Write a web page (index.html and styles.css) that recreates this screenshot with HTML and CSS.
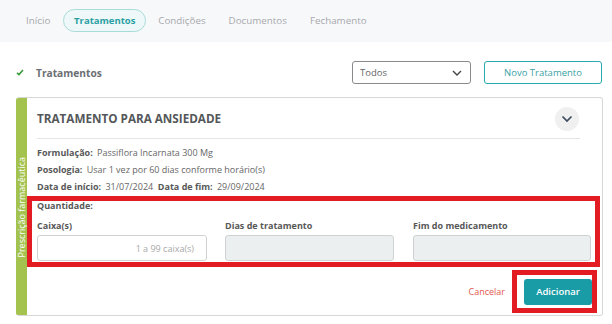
FILE: index.html
```html
<!DOCTYPE html>
<html lang="pt">
<head>
<meta charset="utf-8">
<link rel="stylesheet" href="styles.css">
</head>
<body>
<nav class="tabs">
  <span class="tab">Início</span>
  <span class="tab active">Tratamentos</span>
  <span class="tab">Condições</span>
  <span class="tab">Documentos</span>
  <span class="tab">Fechamento</span>
</nav>
<div class="section-head">
  <div class="section-title">
    <svg class="check" width="8" height="7" viewBox="0 0 8 7"><path d="M1 3.8 L3 5.6 L7 1" fill="none" stroke="#3a9a3a" stroke-width="1.6"/></svg>
    <span>Tratamentos</span>
  </div>
  <div class="section-actions">
    <div class="select"><span>Todos</span>
      <svg width="10" height="6" viewBox="0 0 10 6"><path d="M1 1 L5 5 L9 1" fill="none" stroke="#444" stroke-width="1.4"/></svg>
    </div>
    <button class="btn-outline">Novo Tratamento</button>
  </div>
</div>
<div class="card">
  <div class="strip"><span>Prescrição farmacêutica</span></div>
  <div class="card-body">
    <div class="card-head">
      <h2>TRATAMENTO PARA ANSIEDADE</h2>
      <span class="chev"><svg width="12" height="8" viewBox="0 0 12 8"><path d="M1.5 1.5 L6 6 L10.5 1.5" fill="none" stroke="#3b4a5e" stroke-width="1.7"/></svg></span>
    </div>
    <div class="info">
      <p><b>Formulação:</b> Passiflora Incarnata 300 Mg</p>
      <p><b>Posologia:</b> Usar 1 vez por 60 dias conforme horário(s)</p>
      <p><b>Data de início:</b> 31/07/2024 &nbsp;<b>Data de fim:</b> 29/09/2024</p>
    </div>
    <div class="qty">
      <div class="qty-title">Quantidade:</div>
      <div class="fields">
        <label class="field f1"><span>Caixa(s)</span><div class="input">1 a 99 caixa(s)</div></label>
        <label class="field f2"><span>Dias de tratamento</span><div class="input disabled"></div></label>
        <label class="field f3"><span>Fim do medicamento</span><div class="input disabled"></div></label>
      </div>
    </div>
    <div class="actions">
      <span class="cancel">Cancelar</span>
      <div class="hl"><button class="btn-primary">Adicionar</button></div>
    </div>
  </div>
</div>
</body>
</html>
```
FILE: styles.css
```css
* { box-sizing: border-box; }
body {
  margin: 0;
  background: #fff;
  font-family: "Open Sans", "Noto Sans", sans-serif;
  color: #555;
  width: 612px;
  height: 324px;
  overflow: hidden;
}
.tabs {
  height: 42px;
  background: #f7f8fa;
  display: flex;
  align-items: center;
  padding: 0 0 1px 26px;
}
.tab {
  font-size: 9.8px;
  color: #a7a9ad;
  margin-right: 23px;
}
.tab:first-child { margin-right: 13px; }
.tab.active {
  height: 23px;
  width: 83px;
  display: inline-flex;
  align-items: center;
  justify-content: center;
  border: 1px solid #a9dcd8;
  background: #eef8f8;
  color: #2a9fa3;
  font-weight: 700;
  font-size: 9.5px;
  border-radius: 12px;
  margin-right: 12px;
}
.section-head {
  display: flex;
  justify-content: space-between;
  align-items: flex-start;
  padding: 19px 10px 0 16px;
  height: 55px;
}
.section-title {
  display: flex;
  align-items: center;
  height: 23px;
  font-weight: 700;
  font-size: 10.2px;
  color: #6b6f74;
}
.check { margin-right: 12px; }
.section-actions { display: flex; gap: 13px; }
.select {
  width: 119px;
  height: 23px;
  border: 1px solid #8a8a8a;
  border-radius: 3px;
  display: flex;
  align-items: center;
  justify-content: space-between;
  padding: 0 8px 0 7px;
  font-size: 9.5px;
  color: #666;
}
.btn-outline {
  width: 118px;
  height: 23px;
  border: 1px solid #2aa9ae;
  background: #fff;
  border-radius: 3px;
  font-family: inherit;
  font-size: 9.5px;
  color: #3a9fa4;
}
.card {
  margin: 0 9px 0 16px;
  height: 219px;
  border: 1px solid #d8d8d8;
  border-left: none;
  border-radius: 3px;
  display: flex;
  overflow: hidden;
}
.strip {
  width: 11px;
  background: #a4c24e;
  display: flex;
  align-items: flex-end;
  justify-content: center;
}
.strip span {
  writing-mode: vertical-rl;
  transform: rotate(180deg);
  font-size: 9px;
  color: #fff;
  white-space: nowrap;
  margin-bottom: 58px;
  line-height: 11px;
}
.card-body { flex: 1; display: flex; flex-direction: column; }
.card-head {
  display: flex;
  align-items: center;
  justify-content: space-between;
  margin: 0 22px 0 10px;
  height: 41px;
  border-bottom: 1px solid #e4e4e4;
}
.card-head h2 {
  margin: 0;
  font-size: 11.7px;
  font-weight: 700;
  color: #545759;
}
.chev {
  width: 24px;
  height: 24px;
  border-radius: 50%;
  background: #f0f0f0;
  display: flex;
  align-items: center;
  justify-content: center;
  margin-right: 1px;
  margin-top: 2px;
}
.info { padding: 5px 0 0 10px; }
.info p {
  margin: 0;
  font-size: 9px;
  line-height: 17px;
  color: #666;
}
.info b { color: #585858; font-weight: 700; margin-right: 2px; }
.qty {
  margin: 1px 2px 0 0;
  border: 5px solid #e31b23;
  height: 71px;
  padding: 0 0 0 5px;
}
.qty-title { font-size: 9px; font-weight: 700; color: #585858; line-height: 9px; }
.fields { display: flex; margin-top: 10px; }
.field { display: flex; flex-direction: column; }
.field span { font-size: 9px; font-weight: 700; color: #585858; line-height: 11px; margin-bottom: 4px; }
.f1 { width: 170px; margin-right: 18px; }
.f2 { width: 169px; margin-right: 19px; }
.f3 { width: 178px; }
.input {
  height: 26px;
  border: 1px solid #cfd2d4;
  border-radius: 3px;
  background: #fff;
  font-size: 9px;
  color: #a9a9a9;
  display: flex;
  align-items: center;
  justify-content: flex-end;
  padding-right: 12px;
}
.input.disabled { background: #eceff0; }
.actions {
  display: flex;
  justify-content: flex-end;
  align-items: center;
  margin-top: 3px;
  margin-right: 5px;
}
.cancel { font-size: 9px; color: #e4574f; margin-right: 7px; }
.hl {
  border: 5px solid #e31b23;
  width: 85px;
  height: 43px;
  padding: 3px 0 4px 7px;
}
.btn-primary {
  width: 68px;
  height: 26px;
  background: #1a9ca7;
  border: none;
  border-radius: 3px;
  font-family: inherit;
  font-size: 9.5px;
  font-weight: 600;
  color: #fff;
}
```
